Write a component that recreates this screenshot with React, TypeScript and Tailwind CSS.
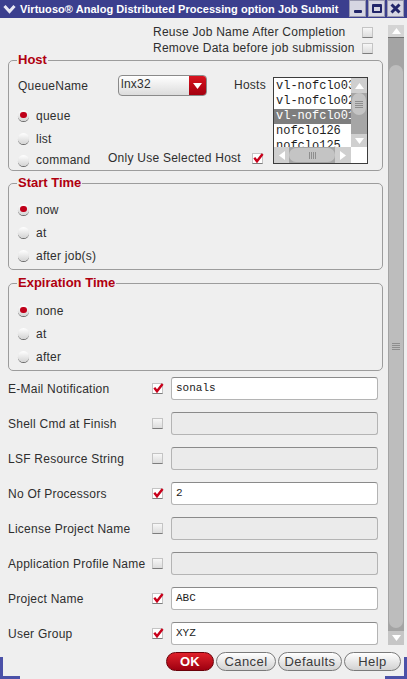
import React from 'react'

function Check({ on = false }: { on?: boolean }) {
  return (
    <span
      className={`relative block w-[11px] h-[11px] shrink-0 border border-[#c4c4c4] border-b-[#7c7c7c] ${
        on ? 'bg-white' : 'bg-linear-to-b from-[#f7f7f7] to-[#dcdcdc]'
      }`}
    >
      {on && (
        <svg className="absolute left-[-1px] top-[-2px]" width="12" height="12" viewBox="0 0 12 12">
          <path d="M2.3 5.8 L5 9.3 L10.6 2" fill="none" stroke="#c8001a" strokeWidth="2.4" />
        </svg>
      )}
    </span>
  )
}

function Radio({ on = false }: { on?: boolean }) {
  return (
    <span className="relative block w-[11px] h-[11px] shrink-0 rounded-full bg-linear-to-b from-white to-[#d4d4d4] shadow-[0_1px_0_#6e6e6e]">
      {on && <span className="absolute left-[2px] top-[1.5px] w-[7px] h-[6px] rounded-full bg-[#c0001a]" />}
    </span>
  )
}

function Up({ c = '#ffffff' }: { c?: string }) {
  return (
    <svg width="9" height="6" viewBox="0 0 9 6">
      <path d="M0 6 L4.5 0 L9 6Z" fill={c} />
    </svg>
  )
}

function Down({ c = '#ffffff' }: { c?: string }) {
  return (
    <svg width="9" height="6" viewBox="0 0 9 6">
      <path d="M0 0 L9 0 L4.5 6Z" fill={c} />
    </svg>
  )
}

function Grip({ vertical = true }: { vertical?: boolean }) {
  return vertical ? (
    <div className="flex flex-col gap-[1px]">
      <div className="w-[8px] h-[1px] bg-[#8e8e8e]" />
      <div className="w-[8px] h-[1px] bg-[#8e8e8e]" />
      <div className="w-[8px] h-[1px] bg-[#8e8e8e]" />
      <div className="w-[8px] h-[1px] bg-[#8e8e8e]" />
    </div>
  ) : (
    <div className="flex flex-row gap-[1px]">
      <div className="w-[1px] h-[7px] bg-[#8e8e8e]" />
      <div className="w-[1px] h-[7px] bg-[#8e8e8e]" />
      <div className="w-[1px] h-[7px] bg-[#8e8e8e]" />
      <div className="w-[1px] h-[7px] bg-[#8e8e8e]" />
    </div>
  )
}

function Group({ title, children }: { title: string; children: React.ReactNode }) {
  return (
    <fieldset className="border border-[#9c9c9c] rounded-[5px]">
      <legend className="ml-[8px] px-[1px] text-[13px] leading-[14px] font-bold text-[#b0000f] tracking-normal">{title}</legend>
      {children}
    </fieldset>
  )
}

function RadioRow({ label, on = false }: { label: string; on?: boolean }) {
  return (
    <div className="h-[23px] flex items-center gap-[7px]">
      <Radio on={on} />
      <span>{label}</span>
    </div>
  )
}

function FormRow({ label, on = false, value }: { label: string; on?: boolean; value?: string }) {
  return (
    <div className="h-[23px] flex items-center">
      <span className="w-[144px] whitespace-nowrap">{label}</span>
      <Check on={on} />
      <div
        className={`ml-[8px] w-[207px] h-[23px] rounded-[3px] border border-[#b4b4b4] border-t-[#8a8a8a] flex items-center pl-[4px] font-['Liberation_Mono',monospace] text-[11px] tracking-normal text-[#222] ${
          on ? 'bg-white' : 'bg-[#ebebeb]'
        }`}
      >
        {value}
      </div>
    </div>
  )
}

function Btn({ label, ok = false }: { label: string; ok?: boolean }) {
  return (
    <div
      className={`h-[19px] rounded-full border flex items-center justify-center text-[13px] ${
        ok
          ? 'w-[48px] border-[#6a0008] bg-linear-to-b from-[#e0202a] to-[#9e0010] text-white font-bold'
          : 'border-[#7a7a7a] bg-linear-to-b from-white to-[#d2d2d2] text-[#3a3a3a] tracking-[0.4px]'
      }`}
    >
      {label}
    </div>
  )
}

function HostList() {
  const items = ['vl-nofclo03', 'vl-nofclo02', 'vl-nofclo01', 'nofclo126', 'nofclo125']
  return (
    <div className="mt-[3px] w-[95px] h-[87px] border border-[#3c3c3c] bg-white flex flex-col">
      <div className="flex flex-row h-[69px]">
        <div className="w-[77px] overflow-hidden font-['Liberation_Mono',monospace] text-[12px] leading-[15px] tracking-normal pt-[1px]">
          {items.map((it, i) => (
            <div key={it} className={`pl-[2px] whitespace-nowrap ${i === 2 ? 'bg-[#7e7e7e] text-white' : 'text-[#1e1e1e]'}`}>
              {it}
            </div>
          ))}
        </div>
        <div className="w-[16px] flex flex-col bg-[#a6a6a6]">
          <div className="h-[15px] bg-[#cfcfcf] flex items-center justify-center">
            <Up />
          </div>
          <div className="h-[22px] mx-[1px] rounded-[7px] bg-[#c4c4c4] flex items-center justify-center">
            <Grip />
          </div>
          <div className="flex-1" />
          <div className="h-[13px] bg-[#cfcfcf] flex items-center justify-center">
            <Down />
          </div>
        </div>
      </div>
      <div className="flex flex-row h-[16px]">
        <div className="w-[77px] flex flex-row bg-[#a6a6a6]">
          <div className="w-[15px] bg-[#cfcfcf] flex items-center justify-center">
            <svg width="6" height="9" viewBox="0 0 6 9">
              <path d="M6 0 L6 9 L0 4.5Z" fill="#fff" />
            </svg>
          </div>
          <div className="w-[46px] my-[1px] rounded-[7px] bg-[#c4c4c4] flex items-center justify-center">
            <Grip vertical={false} />
          </div>
          <div className="flex-1 bg-[#cfcfcf] flex items-center justify-center">
            <svg width="6" height="9" viewBox="0 0 6 9">
              <path d="M0 0 L0 9 L6 4.5Z" fill="#fff" />
            </svg>
          </div>
        </div>
        <div className="flex-1 bg-white" />
      </div>
    </div>
  )
}

function MainScroll() {
  return (
    <div className="mt-[7px] w-[16px] h-[620px] flex flex-col bg-[#a4a4a4]">
      <div className="h-[13px] bg-[#d4d4d4] border-b border-[#707070] flex items-center justify-center">
        <Up />
      </div>
      <div className="flex-1 flex flex-col pt-[27px] pb-[3px] px-[1px]">
        <div className="flex-1 rounded-[7px] bg-[#bdbdbd] flex items-center justify-center">
          <Grip />
        </div>
      </div>
      <div className="h-[14px] bg-[#c6c6c6] flex items-center justify-center">
        <Down />
      </div>
    </div>
  )
}

export default function App() {
  return (
    <div className="relative w-[407px] h-[679px] overflow-hidden bg-[#efefef] font-['Liberation_Sans',Arial,sans-serif] text-[12px] tracking-[0.25px] text-[#2e2e2e]">
      <div className="h-[18px] bg-[#3b3f8e] flex flex-row items-center tracking-normal">
        <svg className="ml-[3px]" width="13" height="10" viewBox="0 0 13 10">
          <path d="M1.5 2 L6.5 7.5 L11.5 2" fill="none" stroke="#e8e8f4" strokeWidth="3" />
        </svg>
        <span className="ml-[4px] text-white font-bold text-[11px] tracking-[0.05px] whitespace-nowrap">
          Virtuoso® Analog Distributed Processing option Job Submit
        </span>
        <div className="flex-1" />
        <div className="flex flex-row gap-[2px] pr-[3px] h-[17px] self-start">
          <div className="w-[17px] h-[17px] bg-[#d6d6e2] border border-[#9a9ab0] flex items-end justify-center pb-[3px]">
            <div className="w-[8px] h-[3px] rounded-[1px] bg-[#22266a]" />
          </div>
          <div className="w-[17px] h-[17px] bg-[#d6d6e2] border border-[#9a9ab0] flex items-center justify-center">
            <div className="w-[10px] h-[9px] border-[2px] border-t-[3px] border-[#22266a] rounded-[1px]" />
          </div>
          <div className="w-[17px] h-[17px] bg-[#d6d6e2] border border-[#9a9ab0] flex items-center justify-center">
            <svg width="11" height="11" viewBox="0 0 11 11">
              <path d="M1.5 1.5 L9.5 9.5 M9.5 1.5 L1.5 9.5" stroke="#22266a" strokeWidth="3" />
            </svg>
          </div>
        </div>
      </div>

      <div className="flex flex-row">
        <div className="w-[388px] pl-[8px] pr-[5px] pt-[6px]">
          <div className="h-[16px] flex items-center pl-[145px]">
            <span className="flex-1">Reuse Job Name After Completion</span>
            <span className="mr-[10px]">
              <Check />
            </span>
          </div>
          <div className="h-[16px] flex items-center pl-[145px]">
            <span className="flex-1">Remove Data before job submission</span>
            <span className="mr-[10px]">
              <Check />
            </span>
          </div>

          <div className="mt-[-3px]">
            <Group title="Host">
              <div className="pl-[9px] pt-[7px] flex flex-row">
                <div className="w-[255px] flex flex-col">
                  <div className="h-[23px] flex items-center">
                    <span className="w-[100px]">QueueName</span>
                    <div className="w-[89px] h-[21px] rounded-[4px] border border-[#8a8a8a] bg-linear-to-b from-white to-[#dcdcdc] flex flex-row overflow-hidden">
                      <span className="flex-1 pl-[2px] text-[12px] leading-[14px] pt-[1px]">lnx32</span>
                      <span className="w-[17px] bg-linear-to-b from-[#d8141f] to-[#a4000f] flex items-center justify-center">
                        <Down />
                      </span>
                    </div>
                    <span className="ml-[27px] self-start mt-[2px]">Hosts</span>
                  </div>
                  <div className="mt-[7px]">
                    <RadioRow label="queue" on />
                  </div>
                  <RadioRow label="list" />
                  <div className="h-[20px] flex items-center">
                    <Radio />
                    <span className="ml-[7px] w-[72px]">command</span>
                    <span className="mt-[-4px]">Only Use Selected Host</span>
                    <span className="ml-[11px] mt-[-4px]">
                      <Check on />
                    </span>
                  </div>
                </div>
                <HostList />
              </div>
            </Group>
          </div>

          <div className="mt-[5px]">
            <Group title="Start Time">
              <div className="pl-[9px] pt-[8px] pb-[2px]">
                <RadioRow label="now" on />
                <RadioRow label="at" />
                <RadioRow label="after job(s)" />
              </div>
            </Group>
          </div>

          <div className="mt-[6px]">
            <Group title="Expiration Time">
              <div className="pl-[9px] pt-[9px] pb-[2px]">
                <RadioRow label="none" on />
                <RadioRow label="at" />
                <RadioRow label="after" />
              </div>
            </Group>
          </div>

          <div className="mt-[6px] flex flex-col gap-[12px]">
            <FormRow label="E-Mail Notification" on value="sonals" />
            <FormRow label="Shell Cmd at Finish" />
            <FormRow label="LSF Resource String" />
            <FormRow label="No Of Processors" on value="2" />
            <FormRow label="License Project Name" />
            <FormRow label="Application Profile Name" />
            <FormRow label="Project Name" on value="ABC" />
            <FormRow label="User Group" on value="XYZ" />
          </div>
        </div>
        <MainScroll />
      </div>

      <div className="pt-[7px] pr-[6px] flex flex-row justify-end gap-[2px]">
        <div className="ml-0">
          <Btn label="OK" ok />
        </div>
        <div className="w-[60px]">
          <Btn label="Cancel" />
        </div>
        <div className="w-[64px]">
          <Btn label="Defaults" />
        </div>
        <div className="w-[57px]">
          <Btn label="Help" />
        </div>
      </div>

      <div className="absolute left-0 bottom-0 w-[20px] h-[3px] bg-[#4b51a8]" />
      <div className="absolute left-0 bottom-0 w-[3px] h-[22px] bg-[#4b51a8]" />
      <div className="absolute right-0 bottom-0 w-[22px] h-[3px] bg-[#4b51a8]" />
      <div className="absolute right-0 bottom-0 w-[3px] h-[22px] bg-[#4b51a8]" />
    </div>
  )
}
